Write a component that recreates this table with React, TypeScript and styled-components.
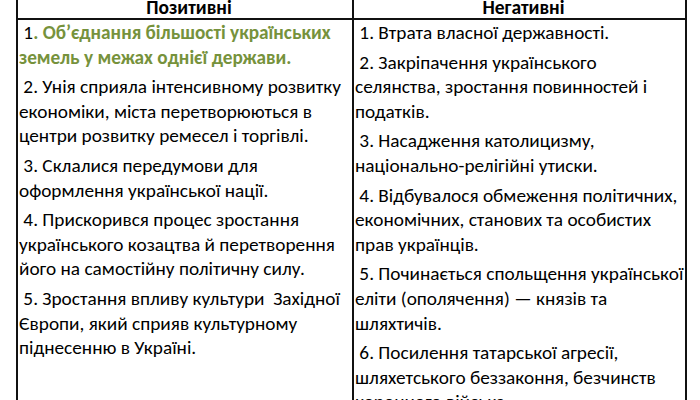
import styled, { createGlobalStyle } from "styled-components";

const GlobalStyle = createGlobalStyle`
  html, body {
    margin: 0;
    padding: 0;
    background: #ffffff;
  }
  body {
    font-family: Carlito, Lato, "Liberation Sans", sans-serif;
    color: #000000;
  }
`;

const positive: string[] = [
  " 2. Унія сприяла інтенсивному розвитку економіки, міста перетворюються в центри розвитку ремесел і торгівлі.",
  " 3. Склалися передумови для оформлення української нації.",
  " 4. Прискорився процес зростання українського козацтва й перетворення його на самостійну політичну силу.",
  " 5. Зростання впливу культури  Західної Європи, який сприяв культурному піднесенню в Україні.",
];

const negative: string[] = [
  " 1. Втрата власної державності.",
  " 2. Закріпачення українського селянства, зростання повинностей і податків.",
  " 3. Насадження католицизму, національно-релігійні утиски.",
  " 4. Відбувалося обмеження політичних, економічних, станових та особистих прав українців.",
  " 5. Починається спольщення української еліти (ополячення) — князів та шляхтичів.",
  " 6. Посилення татарської агресії, шляхетського беззаконня, безчинств коронного війська.",
];

const App: React.FC = () => {
  return (
    <Page>
      <GlobalStyle />
      <Table>
        <HeadCell $divider>Позитивні</HeadCell>
        <HeadCell>Негативні</HeadCell>
        <BodyCell $divider>
          <Para>
            {" 1"}
            <Accent>. Об’єднання більшості українських земель у межах однієї держави.</Accent>
          </Para>
          {positive.map((text) => (
            <Para key={text}>{text}</Para>
          ))}
        </BodyCell>
        <BodyCell>
          {negative.map((text) => (
            <Para key={text}>{text}</Para>
          ))}
        </BodyCell>
      </Table>
    </Page>
  );
};

export default App;

const Page = styled.div`
  width: 700px;
  height: 400px;
  overflow: hidden;
  padding-left: 16px;
  box-sizing: border-box;
`;

const Table = styled.div`
  display: grid;
  grid-template-columns: 336px 331px;
  margin-top: -4px;
  border-left: 2px solid #111;
  border-right: 2px solid #111;
  width: max-content;
`;

const HeadCell = styled.div<{ $divider?: boolean }>`
  font-weight: 700;
  font-size: 19.5px;
  line-height: 22px;
  text-align: center;
  padding-left: 8px;
  border-bottom: 2px solid #111;
  border-right: ${({ $divider }) => ($divider ? "2px solid #111" : "none")};
`;

const BodyCell = styled.div<{ $divider?: boolean }>`
  padding: 1px 0 0 1px;
  font-size: 19.3px;
  border-right: ${({ $divider }) => ($divider ? "2px solid #111" : "none")};
`;

const Para = styled.p`
  margin: 0 0 5px;
  line-height: 24.6px;
  white-space: pre-wrap;
`;

const Accent = styled.span`
  color: #76923c;
  font-weight: 700;
`;
